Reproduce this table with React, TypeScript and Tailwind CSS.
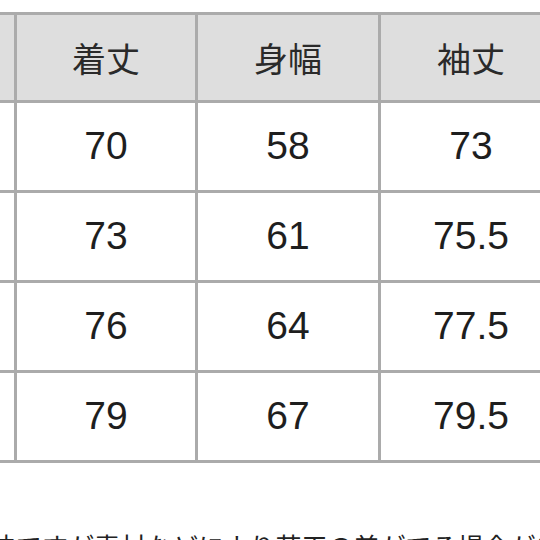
import React from 'react';

// first column sits off the left edge of the view, so its cells stay empty
const headers = ['', '着丈', '身幅', '袖丈'];

const rows = [
  ['', '70', '58', '73'],
  ['', '73', '61', '75.5'],
  ['', '76', '64', '77.5'],
  ['', '79', '67', '79.5'],
];

const App = () => {
  return (
    <div className="w-[540px] h-[540px] overflow-hidden bg-white font-['Liberation_Sans','Noto_Sans_CJK_JP',sans-serif]">
      <div className="mt-[12px] ml-[-167px] w-max grid grid-cols-[178px_178px_180px_180px] gap-[3px] p-[3px] bg-[#ababab]">
        {headers.map((h, i) => (
          <div
            key={'h' + i}
            className="h-[85px] bg-[#dedede] flex items-center justify-center text-[34px] text-[#2a2a2a] font-['Noto_Sans_CJK_JP',sans-serif]"
          >
            {h}
          </div>
        ))}
        {rows.map((row, r) =>
          row.map((cell, i) => (
            <div
              key={r + '-' + i}
              className="h-[87px] bg-white flex items-center justify-center text-[39px] text-[#1e1e1e]"
            >
              {cell}
            </div>
          ))
        )}
      </div>
      <p className="mt-[70px] ml-[-36px] whitespace-nowrap text-[26px] leading-none text-[#222] font-['Noto_Sans_CJK_JP',sans-serif]">
        寸法ですが素材などにより若干の差がでる場合があります。
      </p>
    </div>
  );
};

export default App;
